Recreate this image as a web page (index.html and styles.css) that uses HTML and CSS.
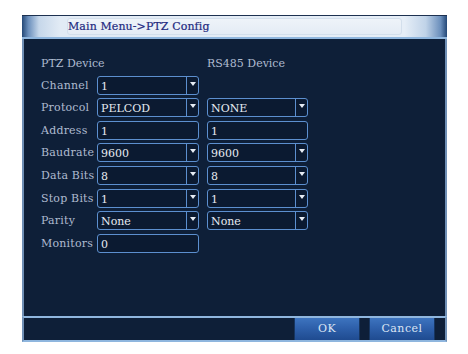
FILE: index.html
```
<!DOCTYPE html>
<html>
<head>
<meta charset="utf-8">
<link rel="stylesheet" href="styles.css">
</head>
<body>
<div class="panel">
  <div class="header">
    <div class="title-box">Main Menu-&gt;PTZ Config</div>
  </div>
  <div class="body">
    <div class="form">
      <div class="heading span2">PTZ Device</div>
      <div class="heading">RS485 Device</div>

      <div class="label">Channel</div>
      <div class="box select"><span class="val">1</span><span class="arrow"></span></div>
      <div></div>

      <div class="label">Protocol</div>
      <div class="box select"><span class="val">PELCOD</span><span class="arrow"></span></div>
      <div class="box select"><span class="val">NONE</span><span class="arrow"></span></div>

      <div class="label">Address</div>
      <div class="box"><span class="val">1</span></div>
      <div class="box"><span class="val">1</span></div>

      <div class="label">Baudrate</div>
      <div class="box select"><span class="val">9600</span><span class="arrow"></span></div>
      <div class="box select"><span class="val">9600</span><span class="arrow"></span></div>

      <div class="label">Data Bits</div>
      <div class="box select"><span class="val">8</span><span class="arrow"></span></div>
      <div class="box select"><span class="val">8</span><span class="arrow"></span></div>

      <div class="label">Stop Bits</div>
      <div class="box select"><span class="val">1</span><span class="arrow"></span></div>
      <div class="box select"><span class="val">1</span><span class="arrow"></span></div>

      <div class="label">Parity</div>
      <div class="box select"><span class="val">None</span><span class="arrow"></span></div>
      <div class="box select"><span class="val">None</span><span class="arrow"></span></div>

      <div class="label">Monitors</div>
      <div class="box"><span class="val">0</span></div>
      <div></div>
    </div>
  </div>
  <div class="footer">
    <div class="btn">OK</div>
    <div class="btn">Cancel</div>
  </div>
</div>
</body>
</html>
```
FILE: styles.css
```
html, body {
  margin: 0;
  padding: 0;
  background: #ffffff;
}
body {
  font-family: "DejaVu Serif", "Liberation Serif", serif;
  font-size: 11px;
}
.panel {
  margin: 15px 0 0 22px;
  width: 425px;
  height: 327px;
  display: flex;
  flex-direction: column;
  box-sizing: border-box;
}
.header {
  height: 24px;
  box-sizing: border-box;
  border-top: 1px solid #1d3150;
  border-bottom: 2px solid #8fb6de;
  background: linear-gradient(to right, #244877 0, #6b8fbc 1.5%, #c6d7ea 4%, #e2ebf5 9%, #e6eef7 90%, #c0d3e8 95%, #6b8fbc 98.5%, #244877 100%);
  padding: 2px 0 0 45px;
}
.title-box {
  width: 335px;
  height: 17px;
  box-sizing: border-box;
  border: 1px solid #d3dfec;
  border-radius: 3px;
  background: linear-gradient(#eef3f9, #e4ecf5);
  color: #232a80;
  font-size: 11px;
  line-height: 15px;
  padding-left: 0;
  letter-spacing: 0.1px;
  -webkit-text-stroke: 0.2px #232a80;
}
.body {
  flex: 1;
  background: #0e1f38;
  border-left: 2px solid #6f8fb5;
  border-right: 2px solid #6f8fb5;
}
.form {
  display: grid;
  grid-template-columns: 48px 102px 101px;
  grid-template-rows: 16px repeat(8, 19px);
  column-gap: 8px;
  row-gap: 3.6px;
  padding: 17px 0 0 17px;
}
.heading {
  color: #aebbd0;
  line-height: 16px;
  white-space: nowrap;
}
.span2 {
  grid-column: 1 / 3;
}
.label {
  color: #aebbd0;
  line-height: 19px;
  white-space: nowrap;
  letter-spacing: 0.2px;
}
.box {
  box-sizing: border-box;
  border: 1.5px solid #5c8fcf;
  border-radius: 3px;
  background: #0b1a31;
  display: flex;
  align-items: stretch;
  color: #e6ebf2;
}
.val {
  flex: 1;
  padding-left: 3px;
  line-height: 18px;
  padding-top: 1px;
  white-space: nowrap;
}
.arrow {
  width: 11px;
  border-left: 1.5px solid #5c8fcf;
  position: relative;
}
.arrow::after {
  content: "";
  position: absolute;
  left: 3px;
  top: 5px;
  border-left: 3px solid transparent;
  border-right: 3px solid transparent;
  border-top: 4px solid #e8edf5;
}
.footer {
  height: 26px;
  box-sizing: border-box;
  background: #0e1f38;
  border-top: 2px solid #8fb6de;
  border-bottom: 2px solid #8fb6de;
  border-left: 2px solid #6f8fb5;
  border-right: 2px solid #6f8fb5;
  display: flex;
  justify-content: flex-end;
  gap: 9px;
  padding-right: 10px;
}
.btn {
  width: 66px;
  height: 22px;
  box-sizing: border-box;
  background: linear-gradient(#3d74bf 0, #2e60ab 45%, #1f4b90 100%);
  border-left: 1px solid #17355f;
  border-right: 1px solid #17355f;
  color: #dce6f4;
  text-align: center;
  line-height: 22px;
  letter-spacing: 0.5px;
}
```
